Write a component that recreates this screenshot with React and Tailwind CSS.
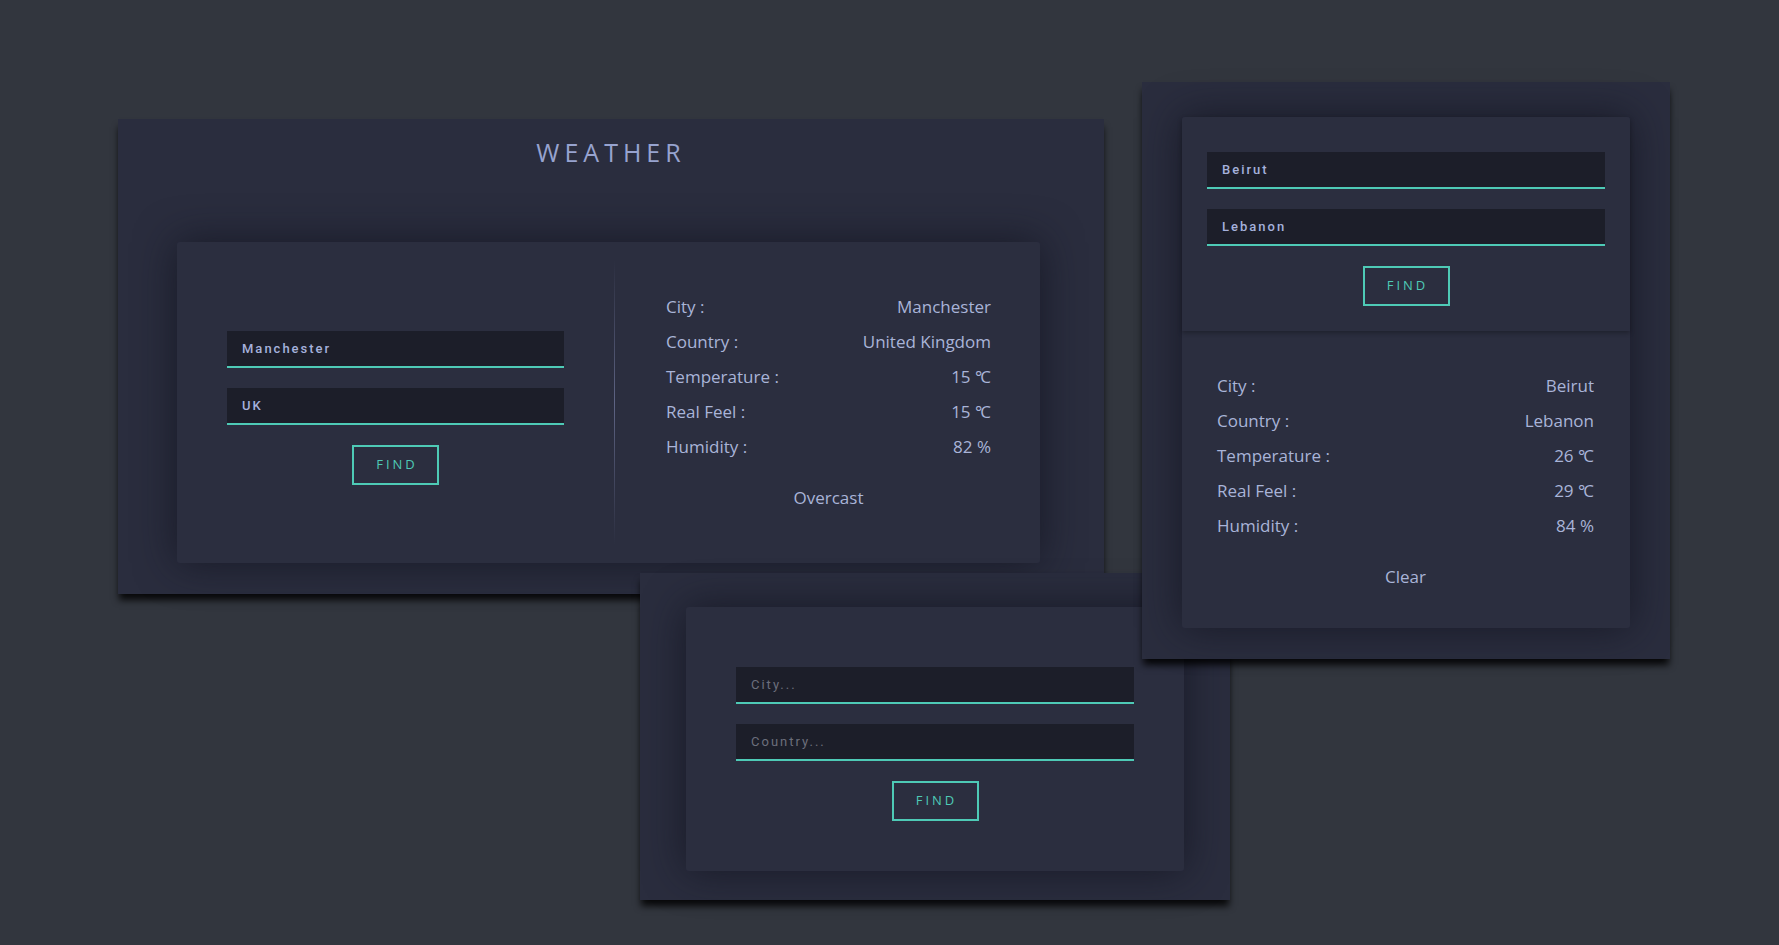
const body = "font-['Open_Sans','Liberation_Sans',sans-serif]"

function Field({ value, placeholder }) {
  return (
    <input
      readOnly
      defaultValue={value}
      placeholder={placeholder}
      className="w-full h-[37px] bg-[#1c1e29] border-b-2 border-[#4ecab6] px-[15px] text-[13px] font-medium tracking-[2px] text-[#a5b1dc] placeholder:text-[#6c6f7c] placeholder:font-normal outline-none font-['Roboto','Liberation_Sans',sans-serif]"
    />
  )
}

function FindButton() {
  return (
    <button className={`w-[87px] h-[40px] shrink-0 border-2 border-[#4ecab6] pl-[3px] text-[13px] tracking-[3px] text-[#4ecab6] ${body}`}>
      FIND
    </button>
  )
}

// "15 °C" with a tight degree sign, like the compact ℃ glyph
function Deg({ n }) {
  return (
    <span>
      {n} <span className="tracking-[-2px]">°</span>C
    </span>
  )
}

function Results({ rows, summary }) {
  return (
    <div className={`text-[17px] text-[#a9b4d8] ${body}`}>
      {rows.map(([label, value]) => (
        <div key={label} className="h-[35px] flex items-center justify-between">
          <span>{label}</span>
          <span>{value}</span>
        </div>
      ))}
      <div className="mt-4 h-[35px] flex items-center justify-center">{summary}</div>
    </div>
  )
}

const outer = 'bg-[#2a2d3e] shadow-[0_7px_7px_-1px_rgba(0,0,0,0.85)]'
const inner = 'rounded-[3px] bg-[#2b2e3f] shadow-[0_0_40px_rgba(17,19,31,0.75)]'

export default function App() {
  return (
    <div className="relative w-[1779px] h-[945px] overflow-hidden bg-[#32363e]">
      {/* Desktop view */}
      <div className={`absolute left-[118px] top-[119px] w-[986px] h-[475px] ${outer}`}>
        <h1 className={`pt-[16px] text-center text-[25px] leading-[34px] tracking-[5px] text-[#97a3cf] ${body}`}>
          WEATHER
        </h1>
        <div className={`mt-[73px] ml-[59px] w-[863px] h-[321px] flex ${inner}`}>
          <div className="w-[437px] pt-[89px] flex flex-col items-center">
            <div className="w-[337px] flex flex-col items-center gap-[20px]">
              <Field value="Manchester" />
              <Field value="UK" />
              <FindButton />
            </div>
          </div>
          <div className="w-px my-[18px] bg-linear-to-b from-transparent via-[#5e6484] to-transparent" />
          <div className="flex-1 pl-[51px] pr-[49px] flex flex-col justify-center">
            <Results
              rows={[
                ['City :', 'Manchester'],
                ['Country :', 'United Kingdom'],
                ['Temperature :', <Deg n="15" />],
                ['Real Feel :', <Deg n="15" />],
                ['Humidity :', '82 %'],
              ]}
              summary="Overcast"
            />
          </div>
        </div>
      </div>

      {/* Empty search */}
      <div className={`absolute left-[640px] top-[573px] w-[590px] h-[327px] pt-[34px] px-[46px] ${outer}`}>
        <div className={`h-[264px] pt-[60px] px-[50px] flex flex-col items-center gap-[20px] ${inner}`}>
          <Field placeholder="City..." />
          <Field placeholder="Country..." />
          <FindButton />
        </div>
      </div>

      {/* Mobile view */}
      <div className={`absolute left-[1142px] top-[82px] w-[528px] h-[577px] pt-[35px] px-[40px] ${outer}`}>
        <div className={`h-[511px] flex flex-col ${inner}`}>
          <div className="relative z-10 h-[214px] pt-[35px] px-[25px] flex flex-col items-center gap-[20px] rounded-t-[3px] bg-[#2b2e3f] shadow-[0_2px_5px_rgba(0,0,0,0.3)]">
            <Field value="Beirut" />
            <Field value="Lebanon" />
            <FindButton />
          </div>
          <div className="flex-1 pl-[35px] pr-[36px] pt-[37px]">
            <Results
              rows={[
                ['City :', 'Beirut'],
                ['Country :', 'Lebanon'],
                ['Temperature :', <Deg n="26" />],
                ['Real Feel :', <Deg n="29" />],
                ['Humidity :', '84 %'],
              ]}
              summary="Clear"
            />
          </div>
        </div>
      </div>
    </div>
  )
}
